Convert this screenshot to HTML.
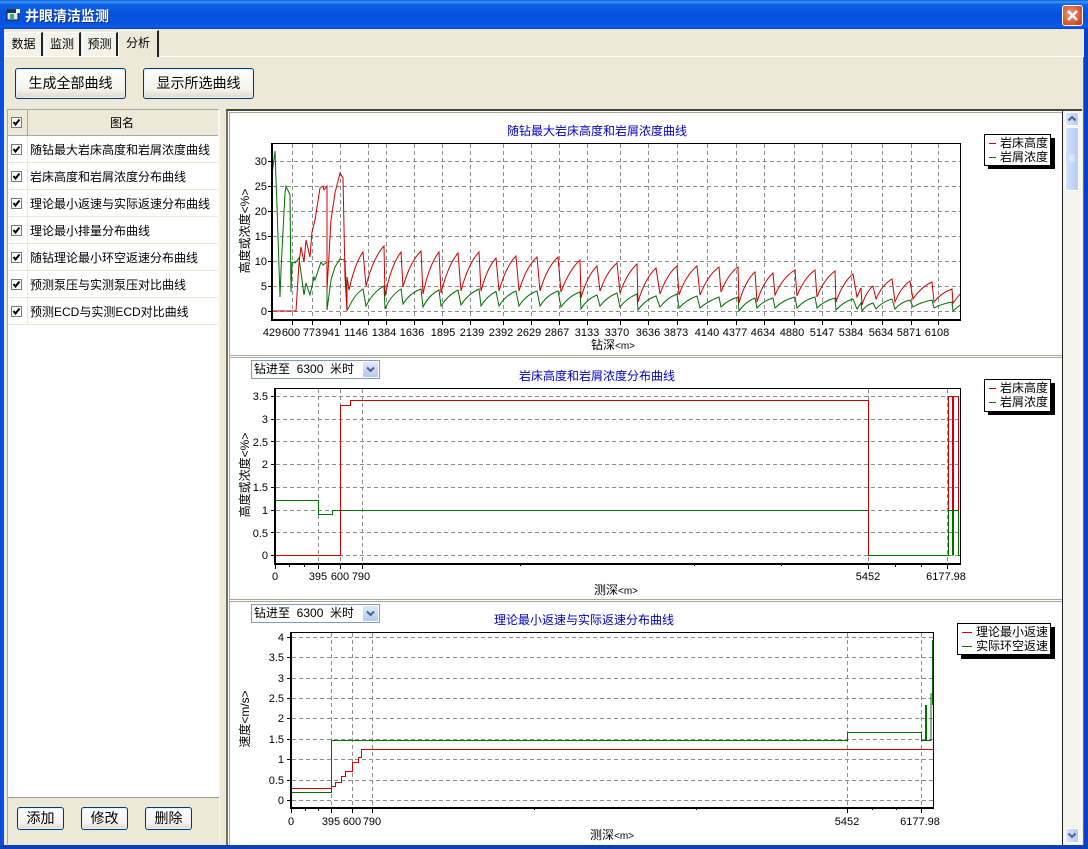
<!DOCTYPE html>
<html><head><meta charset="utf-8">
<style>
html,body{margin:0;padding:0}
body{width:1088px;height:849px;overflow:hidden;position:relative;background:#ECE9D8;font:12px "Liberation Sans","Noto Sans CJK SC",sans-serif;color:#000}
.a{position:absolute;box-sizing:border-box}
.btn{position:absolute;box-sizing:border-box;border:1px solid #003c74;border-radius:3px;background:linear-gradient(#fff,#f4f3ee 70%,#dcd8c8);text-align:center;box-shadow:inset 0 0 0 1px #e8f0f8}
.tab{position:absolute;box-sizing:border-box;text-align:center;font-size:12px;background:#f4f3ea;border-right:2px solid #222;border-top:1px solid #fff;border-left:1px solid #fff}
.row{position:absolute;left:8px;width:210px;height:27px;border-bottom:1px solid #ece9d8;box-sizing:border-box}
.row span{position:absolute;left:22px;top:5px;white-space:nowrap;font-size:12px}
.ck{position:absolute;left:4px;top:8px;width:11px;height:11px;border:1px solid #7a7a70;background:#fff;box-sizing:border-box}
.ck svg{position:absolute;left:0;top:0}
.combo{position:absolute;left:251px;width:129px;height:19px;border:1px solid #7f9db9;background:#fff;box-sizing:border-box;font-size:12px;padding:0 0 0 2px;line-height:16px;white-space:pre}
.combo i{position:absolute;right:1px;top:1px;width:15px;height:15px;background:linear-gradient(#dfe8fb,#b6c8f0);border-radius:1px}
.combo svg{position:absolute;left:3px;top:4px}
text{font-family:"Liberation Sans","Noto Sans CJK SC",sans-serif;font-size:12px;fill:#000}
.t{fill:#0000c0;text-anchor:middle}
.c{text-anchor:middle}
.c tspan{font-size:10px}
.m{text-anchor:middle;font-size:11px}
.e{text-anchor:end;font-size:11px}
</style></head><body>
<!-- title bar -->
<div class="a" style="left:0;top:0;width:1088px;height:29px;background:linear-gradient(#0a58d8 0,#3d94f6 6%,#0f62e2 16%,#0453dc 50%,#0553e0 80%,#0a5cf0 92%,#0543c0 100%)"></div>
<div class="a" style="left:0;top:29px;width:4px;height:820px;background:#0a4fe0"></div>
<div class="a" style="left:1084px;top:29px;width:4px;height:820px;background:#0a3fc8"></div>
<div class="a" style="left:0;top:845px;width:1088px;height:4px;background:#0a3fb8"></div>
<svg class="a" style="left:6px;top:8px" width="15" height="14" viewBox="0 0 15 14"><rect x="1" y="2" width="11" height="10" fill="#dfe6f0" stroke="#123"/><rect x="1" y="2" width="11" height="3" fill="#234"/><rect x="4" y="6" width="4" height="5" fill="#3a8"/><rect x="10" y="1" width="4" height="4" fill="#fff"/></svg>
<div class="a" style="left:25px;top:6px;color:#fff;font-size:14px;font-weight:bold;letter-spacing:0;white-space:nowrap;text-shadow:1px 1px 0 #0a2c90;font-family:'Liberation Sans','Noto Sans CJK SC',sans-serif">井眼清洁监测</div>
<div class="a" style="left:1062px;top:5px;width:21px;height:21px;border:1px solid #fff;border-radius:3px;background:radial-gradient(circle at 40% 40%,#e89a80,#d4502c 70%,#c03818)"><svg width="19" height="19"><path d="M5 5L14 14M14 5L5 14" stroke="#fff" stroke-width="2.6"/></svg></div>

<!-- tabs -->
<div class="a" style="left:4px;top:56px;width:1080px;height:1px;background:#fff"></div>
<div class="a" style="left:1083px;top:57px;width:1px;height:788px;background:#716f64"></div>
<div class="tab" style="left:5px;top:32px;width:38px;height:24px;line-height:23px">数据</div>
<div class="tab" style="left:44px;top:32px;width:37px;height:24px;line-height:23px">监测</div>
<div class="tab" style="left:82px;top:32px;width:36px;height:24px;line-height:23px">预测</div>
<div class="tab" style="left:118px;top:30px;width:41px;height:27px;line-height:24px;background:#ECE9D8">分析</div>

<div class="btn" style="left:15px;top:68px;width:111px;height:31px;line-height:29px;font-size:14px">生成全部曲线</div>
<div class="btn" style="left:143px;top:68px;width:111px;height:31px;line-height:29px;font-size:14px">显示所选曲线</div>

<!-- left panel -->
<div class="a" style="left:7px;top:109px;width:213px;height:735px;border:1px solid #aca899;border-right:2px solid #f8f7f0;background:#fff"></div>
<div class="a" style="left:8px;top:110px;width:210px;height:26px;background:#ECE9D8;border-bottom:1px solid #aca899"></div>
<div class="a" style="left:27px;top:110px;width:1px;height:26px;background:#aca899"></div>
<div class="row" style="top:109px;border:0"><div class="ck" style="top:8px;left:3px"><svg width="9" height="9"><path d="M1.5 4L3.5 6.5L7.5 1.5" fill="none" stroke="#000" stroke-width="2"/></svg></div><span style="left:102px;top:5px">图名</span></div>
<div class="a" style="left:27px;top:136px;width:1px;height:189px;background:#ece9d8"></div>
<div class="row" style="top:136px"><div class="ck" style="left:3px"><svg width="9" height="9"><path d="M1.5 4L3.5 6.5L7.5 1.5" fill="none" stroke="#000" stroke-width="2"/></svg></div><span>随钻最大岩床高度和岩屑浓度曲线</span></div>
<div class="row" style="top:163px"><div class="ck" style="left:3px"><svg width="9" height="9"><path d="M1.5 4L3.5 6.5L7.5 1.5" fill="none" stroke="#000" stroke-width="2"/></svg></div><span>岩床高度和岩屑浓度分布曲线</span></div>
<div class="row" style="top:190px"><div class="ck" style="left:3px"><svg width="9" height="9"><path d="M1.5 4L3.5 6.5L7.5 1.5" fill="none" stroke="#000" stroke-width="2"/></svg></div><span>理论最小返速与实际返速分布曲线</span></div>
<div class="row" style="top:217px"><div class="ck" style="left:3px"><svg width="9" height="9"><path d="M1.5 4L3.5 6.5L7.5 1.5" fill="none" stroke="#000" stroke-width="2"/></svg></div><span>理论最小排量分布曲线</span></div>
<div class="row" style="top:244px"><div class="ck" style="left:3px"><svg width="9" height="9"><path d="M1.5 4L3.5 6.5L7.5 1.5" fill="none" stroke="#000" stroke-width="2"/></svg></div><span>随钻理论最小环空返速分布曲线</span></div>
<div class="row" style="top:271px"><div class="ck" style="left:3px"><svg width="9" height="9"><path d="M1.5 4L3.5 6.5L7.5 1.5" fill="none" stroke="#000" stroke-width="2"/></svg></div><span>预测泵压与实测泵压对比曲线</span></div>
<div class="row" style="top:298px"><div class="ck" style="left:3px"><svg width="9" height="9"><path d="M1.5 4L3.5 6.5L7.5 1.5" fill="none" stroke="#000" stroke-width="2"/></svg></div><span>预测ECD与实测ECD对比曲线</span></div>
<div class="a" style="left:8px;top:797px;width:211px;height:47px;background:#ECE9D8;border-top:1px solid #9a9888"></div>
<div class="btn" style="left:17px;top:807px;width:47px;height:23px;line-height:21px;font-size:14px">添加</div>
<div class="btn" style="left:81px;top:807px;width:47px;height:23px;line-height:21px;font-size:14px">修改</div>
<div class="btn" style="left:145px;top:807px;width:47px;height:23px;line-height:21px;font-size:14px">删除</div>

<!-- right panel -->
<div class="a" style="left:226px;top:109px;width:856px;height:736px;background:#fff;border-top:2px solid #45443c;border-left:2px solid #716f64"></div>
<div class="a" style="left:229px;top:112px;width:1px;height:733px;background:#aca899"></div>
<div class="a" style="left:230px;top:112px;width:832px;height:1px;background:#aca899"></div>
<div class="a" style="left:1062px;top:111px;width:1px;height:734px;background:#222"></div>
<div class="a" style="left:230px;top:355px;width:832px;height:3px;background:#fff;border-top:1px solid #aca899;border-bottom:1px solid #aca899"></div>
<div class="a" style="left:230px;top:599px;width:832px;height:3px;background:#fff;border-top:1px solid #aca899;border-bottom:1px solid #aca899"></div>
<!-- scrollbar -->
<div class="a" style="left:1063px;top:111px;width:18px;height:734px;background:#f5f4ec"></div>
<div class="a" style="left:1065px;top:112px;width:14px;height:14px;background:linear-gradient(90deg,#dbe6fb,#b8cbf3);border:1px solid #fff;border-radius:2px"><svg width="12" height="12" style="position:absolute"><path d="M2.5 7.5L6 4L9.5 7.5" fill="none" stroke="#4d6185" stroke-width="2"/></svg></div>
<div class="a" style="left:1065px;top:127px;width:14px;height:64px;background:linear-gradient(90deg,#d3e0fb,#b7cbf5);border:1px solid #fff;border-radius:2px"><svg width="12" height="62" style="position:absolute"><path d="M3 27H9M3 29H9M3 31H9M3 33H9" stroke="#eef3fe"/></svg></div>
<div class="a" style="left:1065px;top:828px;width:14px;height:15px;background:linear-gradient(90deg,#dbe6fb,#b8cbf3);border:1px solid #fff;border-radius:2px"><svg width="12" height="13" style="position:absolute"><path d="M2.5 4.5L6 8L9.5 4.5" fill="none" stroke="#4d6185" stroke-width="2"/></svg></div>

<svg class="a" style="left:0;top:0" width="1062" height="845" viewBox="0 0 1062 845">
<!-- CHART 1 -->
<text class="t" x="597" y="135">随钻最大岩床高度和岩屑浓度曲线</text>
<path fill="none" stroke="#8c8c8c" stroke-dasharray="4 3" d="M273 161.500H960M273 186.500H960M273 211.500H960M273 236.500H960M273 261.500H960M273 286.500H960M273 311.500H960
M292.500 144V319M312.500 144V319M340.500 144V319M368.500 144V319M386.500 144V319M414.500 144V319M442.500 144V319M470.500 144V319M503.500 144V319M531.500 144V319M559.500 144V319M587.500 144V319M620.500 144V319M648.500 144V319M677.500 144V319M707.500 144V319M736.500 144V319M764.500 144V319M794.500 144V319M822.500 144V319M851.500 144V319M882.500 144V319M911.500 144V319M938.500 144V319"/>
<path fill="none" stroke="#007000" d="M272 311L272 175L275 151L277 207L280 297L281 270L285 193L286 186L290 195L291 292L292 262L295 263L299 258L304 295L306 283L310 295L314 277L315 280L321 262L323 265L327 262L327 310L331 280L335 267L340 259L345 260L347 310L349 307Q355 294 363 289L366 306Q373 292 384 286L385 309Q391 295 401 289L403 304Q410 293 421 289L423 307Q429 295 439 290L441 306Q448 295 458 290L461 305Q468 294 479 289L481 306Q487 296 496 291.500L499 306Q506 295 516 291L519 306Q526 295 537 291L540 306Q547 295 558 291L561 307Q569 296 580 292L581 309Q587 299 597 295L600 306Q607 297 617 293L620 307Q627 298 637 294L638 310Q645 300 656 296L660 307Q667 298 677 294L679 308Q686 300 697 296L700 308Q708 301 719 297L721 307Q728 300 738 297L739 311Q745 302 755 298L757 308Q763 301 773 298L775 308Q783 300 795 297L797 308Q804 300 815 297L817 308Q824 301 835 298L836 310Q843 302 853 299L857 309L861 303L862 311Q866 305 873 303L876 309Q882 302 892 299L895 309Q901 302 910 300L913 307Q921 302 932 300L934 308Q941 304 952 302L953 311L960 305"/>
<path fill="none" stroke="#d00000" d="M272 311H296L299 263L301 247L304 262L306 240L310 257L312 232L315 220L320 188L323 186L324 190L327 186L327 290L331 220L335 193L340 173L343 178L345 277L347 311L347 277L349 290Q355 263 363 252L366 286Q373 258 384 246L385 296Q391 265 401 252L403 287Q410 262 421 251L423 294Q429 265 439 252L441 293Q448 265 458 253L461 291Q468 264 479 252L481 291Q487 268 496 258L499 291Q506 266 516 256L519 291Q526 267 537 257L540 291Q547 267 558 257L561 292Q569 270 580 260L581 298Q587 276 597 266L600 291Q607 271 617 263L620 293Q627 273 637 264L638 302Q645 278 656 268L660 294Q667 274 677 266L679 295Q686 275 697 266L700 295Q708 275 719 267L721 292Q728 274 738 267L739 303Q745 281 755 272L757 302Q763 282 773 273L775 295Q783 277 795 270L797 296Q804 278 815 270L817 297Q824 279 835 271L836 302Q843 282 853 274L857 297L861 288L862 305Q866 292 873 286L876 299Q882 285 892 279L895 302Q901 287 910 281L913 299Q921 287 932 282L934 302Q941 293 952 289L953 303L960 294"/>
<path fill="none" stroke="#000" d="M272 143.500H960.500V319"/>
<path fill="none" stroke="#000" stroke-width="2" d="M272 143V320H961"/>
<path fill="none" stroke="#000" d="M268 161.500H272M268 186.500H272M268 211.500H272M268 236.500H272M268 261.500H272M268 286.500H272M268 311.500H272
M292.500 320V325M312.500 320V325M340.500 320V325M368.500 320V325M386.500 320V325M414.500 320V325M442.500 320V325M470.500 320V325M503.500 320V325M531.500 320V325M559.500 320V325M587.500 320V325M620.500 320V325M648.500 320V325M677.500 320V325M707.500 320V325M736.500 320V325M764.500 320V325M794.500 320V325M822.500 320V325M851.500 320V325M882.500 320V325M911.500 320V325M938.500 320V325"/>
<text class="e" x="267" y="165">30</text><text class="e" x="267" y="190">25</text><text class="e" x="267" y="215">20</text><text class="e" x="267" y="240">15</text><text class="e" x="267" y="265">10</text><text class="e" x="267" y="290">5</text><text class="e" x="267" y="315">0</text>
<text class="m" x="272" y="336">429</text><text class="m" x="291" y="336">600</text><text class="m" x="312" y="336">773</text><text class="m" x="331" y="336">941</text><text class="m" x="356" y="336">1146</text><text class="m" x="384" y="336">1384</text><text class="m" x="412" y="336">1636</text><text class="m" x="443" y="336">1895</text><text class="m" x="472" y="336">2139</text><text class="m" x="501" y="336">2392</text><text class="m" x="529" y="336">2629</text><text class="m" x="557" y="336">2867</text><text class="m" x="587" y="336">3133</text><text class="m" x="617" y="336">3370</text><text class="m" x="648" y="336">3636</text><text class="m" x="676" y="336">3873</text><text class="m" x="707" y="336">4140</text><text class="m" x="735" y="336">4377</text><text class="m" x="763" y="336">4634</text><text class="m" x="792" y="336">4880</text><text class="m" x="822" y="336">5147</text><text class="m" x="851" y="336">5384</text><text class="m" x="881" y="336">5634</text><text class="m" x="909" y="336">5871</text><text class="m" x="937" y="336">6108</text>
<text class="c" x="613" y="349">钻深<tspan>&lt;m&gt;</tspan></text>
<text class="c" transform="translate(249,231) rotate(-90)" x="0" y="0">高度或浓度&lt;%&gt;</text>
<rect x="988" y="138" width="67" height="31" fill="#000"/><rect x="984.500" y="134.500" width="66" height="31" fill="#fff" stroke="#000"/>
<path d="M989 143.500H996" stroke="#d00000"/><path d="M989 157.500H996" stroke="#007000"/>
<text x="1000" y="147">岩床高度</text><text x="1000" y="161">岩屑浓度</text>

<!-- CHART 2 -->
<text class="t" x="597" y="380">岩床高度和岩屑浓度分布曲线</text>
<path fill="none" stroke="#8c8c8c" stroke-dasharray="4 3" d="M276 396.500H961M276 419.500H961M276 441.500H961M276 464.500H961M276 487.500H961M276 510.500H961M276 532.500H961M276 555.500H961
M318.500 389V563M340.500 389V563M362.500 389V563M868.500 389V563M947.500 389V563"/>
<path fill="none" stroke="#007000" d="M275 500.500H318.500V514.500H332.500V510.500H868.500V555.500H948.500V510.500H958.500V555.500H961"/>
<path fill="none" stroke="#007000" stroke-width="2" d="M953 510.500V555.500"/>
<path fill="none" stroke="#d00000" d="M275 555.500H340.500V405.500H350.500V400.500H868.500V555.500M948.500 510V396.500H958.500V510"/>
<path fill="none" stroke="#d00000" stroke-width="2" d="M953 396V510"/>
<path fill="none" stroke="#000" d="M275 388.500H960.500V563"/>
<path fill="none" stroke="#000" stroke-width="2" d="M275 388V564H961"/>
<path fill="none" stroke="#000" d="M271 396.500H275M271 419.500H275M271 441.500H275M271 464.500H275M271 487.500H275M271 510.500H275M271 532.500H275M271 555.500H275
M275.500 564V569M318.500 564V569M340.500 564V569M362.500 564V569M868.500 564V569M947.500 564V569M289.500 564V567M304.500 564V567M520.500 564V566M694.500 564V566M781.500 564V566M895.500 564V567M921.500 564V567"/>
<text class="e" x="268" y="400">3.5</text><text class="e" x="268" y="423">3</text><text class="e" x="268" y="446">2.5</text><text class="e" x="268" y="468">2</text><text class="e" x="268" y="491">1.5</text><text class="e" x="268" y="514">1</text><text class="e" x="268" y="537">0.5</text><text class="e" x="268" y="559">0</text>
<text class="m" x="275" y="580">0</text><text class="m" x="318" y="580">395</text><text class="m" x="340" y="580">600</text><text class="m" x="361" y="580">790</text><text class="m" x="868" y="580">5452</text><text class="m" x="946" y="580">6177.98</text>
<text class="c" x="616" y="594">测深<tspan>&lt;m&gt;</tspan></text>
<text class="c" transform="translate(249,475) rotate(-90)" x="0" y="0">高度或浓度&lt;%&gt;</text>
<rect x="988" y="383" width="67" height="32" fill="#000"/><rect x="984.500" y="379.500" width="66" height="32" fill="#fff" stroke="#000"/>
<path d="M989 388.500H996" stroke="#d00000"/><path d="M989 402.500H996" stroke="#007000"/>
<text x="1000" y="392">岩床高度</text><text x="1000" y="406">岩屑浓度</text>

<!-- CHART 3 -->
<text class="t" x="584" y="624">理论最小返速与实际返速分布曲线</text>
<path fill="none" stroke="#8c8c8c" stroke-dasharray="4 3" d="M292 637.500H933M292 657.500H933M292 678.500H933M292 698.500H933M292 718.500H933M292 739.500H933M292 759.500H933M292 780.500H933M292 800.500H933
M331.500 633V807M352.500 633V807M372.500 633V807M847.500 633V807M921.500 633V807"/>
<path fill="none" stroke="#d00000" d="M291 788.500H331.500V786.500H335.500V782.500H341.500V776.500H345.500V771.500H352.500V762.500H358.500V757.500H361.500V749.500H933"/>
<path fill="none" stroke="#007000" d="M291 792.500H331.500V740.500H847.500V732.500H921.500V740.500H931V694H932"/>
<path fill="none" stroke="#007000" stroke-width="2" d="M926 740V705M933 705V640"/>
<path fill="none" stroke="#000" d="M291 632.500H933.500V807"/>
<path fill="none" stroke="#000" stroke-width="2" d="M291 632V808H934"/>
<path fill="none" stroke="#000" d="M287 637.500H291M287 657.500H291M287 678.500H291M287 698.500H291M287 718.500H291M287 739.500H291M287 759.500H291M287 780.500H291M287 800.500H291
M291.500 808V813M331.500 808V813M352.500 808V813M372.500 808V813M847.500 808V813M921.500 808V813M305.500 808V811M318.500 808V811M534.500 808V810M696.500 808V810M872.500 808V810M896.500 808V810"/>
<text class="e" x="284" y="641">4</text><text class="e" x="284" y="661">3.5</text><text class="e" x="284" y="682">3</text><text class="e" x="284" y="702">2.5</text><text class="e" x="284" y="722">2</text><text class="e" x="284" y="743">1.5</text><text class="e" x="284" y="763">1</text><text class="e" x="284" y="784">0.5</text><text class="e" x="284" y="804">0</text>
<text class="m" x="291" y="825">0</text><text class="m" x="331" y="825">395</text><text class="m" x="352" y="825">600</text><text class="m" x="372" y="825">790</text><text class="m" x="847" y="825">5452</text><text class="m" x="920" y="825">6177.98</text>
<text class="c" x="612" y="839">测深<tspan>&lt;m&gt;</tspan></text>
<text class="c" transform="translate(249,719) rotate(-90)" x="0" y="0">速度&lt;m/s&gt;</text>
<rect x="961" y="627" width="94" height="32" fill="#000"/><rect x="957.500" y="623.500" width="93" height="31" fill="#fff" stroke="#000"/>
<path d="M962 632.500H972" stroke="#d00000"/><path d="M962 646.500H972" stroke="#007000"/>
<text x="976" y="636">理论最小返速</text><text x="976" y="650">实际环空返速</text>
</svg>

<div class="combo" style="top:360px">钻进至  6300  米时<i><svg width="9" height="7"><path d="M1 1.500L4.500 5L8 1.500" fill="none" stroke="#4d6185" stroke-width="2"/></svg></i></div>
<div class="combo" style="top:604px">钻进至  6300  米时<i><svg width="9" height="7"><path d="M1 1.500L4.500 5L8 1.500" fill="none" stroke="#4d6185" stroke-width="2"/></svg></i></div>
</body></html>
